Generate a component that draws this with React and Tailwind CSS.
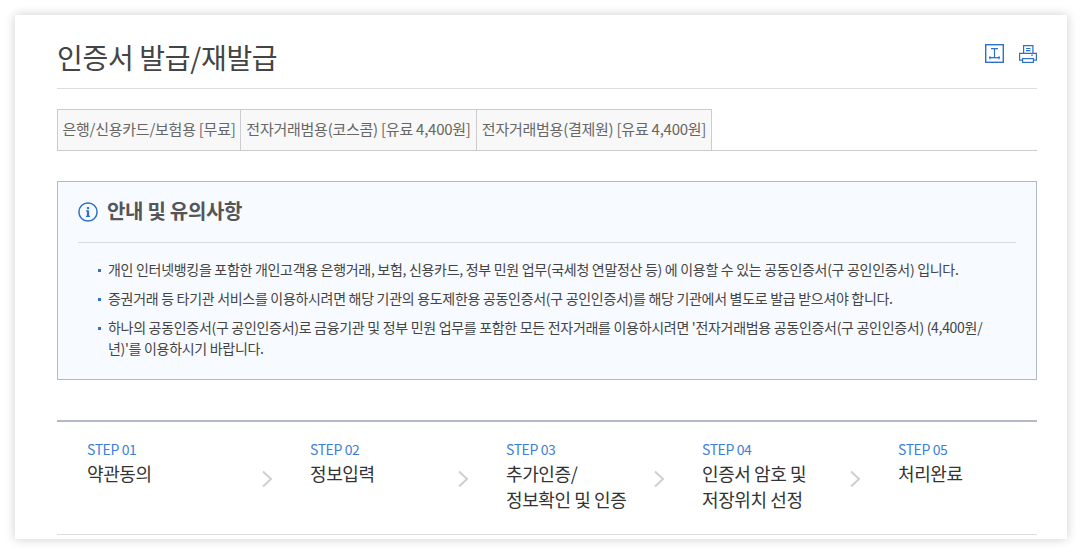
import React from 'react';

const font = { fontFamily: '"Noto Sans CJK KR", "Noto Sans", sans-serif' };

const tabs = [
  { label: '은행/신용카드/보험용 [무료]', w: 'w-[184px]' },
  { label: '전자거래범용(코스콤) [유료 4,400원]', w: 'w-[237px]' },
  { label: '전자거래범용(결제원) [유료 4,400원]', w: 'w-[236px]' },
];

const notes = [
  '개인 인터넷뱅킹을 포함한 개인고객용 은행거래, 보험, 신용카드, 정부 민원 업무(국세청 연말정산 등) 에 이용할 수 있는 공동인증서(구 공인인증서) 입니다.',
  '증권거래 등 타기관 서비스를 이용하시려면 해당 기관의 용도제한용 공동인증서(구 공인인증서)를 해당 기관에서 별도로 발급 받으셔야 합니다.',
  "하나의 공동인증서(구 공인인증서)로 금융기관 및 정부 민원 업무를 포함한 모든 전자거래를 이용하시려면 '전자거래범용 공동인증서(구 공인인증서) (4,400원/년)'를 이용하시기 바랍니다.",
];

const steps = [
  { no: 'STEP 01', lines: ['약관동의'], w: 'w-[253px] pl-[30px]' },
  { no: 'STEP 02', lines: ['정보입력'], w: 'w-[196px]' },
  { no: 'STEP 03', lines: ['추가인증/', '정보확인 및 인증'], w: 'w-[196px]' },
  { no: 'STEP 04', lines: ['인증서 암호 및', '저장위치 선정'], w: 'w-[196px]' },
  { no: 'STEP 05', lines: ['처리완료'], w: 'w-[139px]', last: true },
];

function FontSizeIcon() {
  return (
    <svg width="19" height="19" viewBox="0 0 19 19" fill="none" stroke="#2d72c8">
      <rect x="0.7" y="0.7" width="17.600" height="17.600" strokeWidth="1.400" />
      <path d="M6 4.600h7M9.500 4.600v9" strokeWidth="1.200" />
      <path d="M4 13.700h11" strokeWidth="1.300" />
      <path d="M5 12v3.400M14 12v3.400" strokeWidth="0.900" />
    </svg>
  );
}

function PrintIcon() {
  return (
    <svg width="18" height="18" viewBox="0 0 18 18" fill="none" stroke="#2d72c8" strokeWidth="1.200">
      <path d="M4.600 8V0.600h9.300V8" />
      <path d="M3.500 15.200H0.600V8.300h16.800v6.900h-3" />
      <rect x="3.600" y="13.600" width="10.800" height="3.800" />
      <path d="M7 3.500h4.500M7 5.700h4.500" />
      <path d="M12 10.200h2" strokeWidth="1" />
    </svg>
  );
}

function InfoIcon() {
  return (
    <svg width="20" height="20" viewBox="0 0 20 20" fill="none" className="shrink-0">
      <circle cx="10" cy="10" r="9.100" stroke="#2d72c8" strokeWidth="1.500" />
      <path d="M10 8.600v5.600" stroke="#2d72c8" strokeWidth="2.200" />
      <path d="M8 8.900h2.500M8 14.300h4" stroke="#2d72c8" strokeWidth="1.200" />
      <rect x="8.900" y="5" width="2.200" height="2.100" fill="#2d72c8" />
    </svg>
  );
}

function Chevron() {
  return (
    <svg width="12" height="18" viewBox="0 0 12 18" fill="none" className="absolute right-[37px] top-[31px]">
      <path d="M2 1.500l8 7.500-8 7.500" stroke="#cfcfcf" strokeWidth="2" />
    </svg>
  );
}

export default function App() {
  return (
    <div className="h-[554px] w-[1082px] overflow-hidden bg-white pl-[15px] pt-[15px]" style={font}>
      <div className="h-[524px] w-[1052px] bg-white pl-[42px] pr-[30px] shadow-[0_0_10px_rgba(0,0,0,0.2)]">
        {/* Title */}
        <div className="flex h-[74px] items-center justify-between border-b border-[#dddddd] pt-[11px]">
          <h1 className="text-[28px] font-normal leading-none tracking-[-0.3px] text-[#444444]">인증서 발급/재발급</h1>
          <div className="flex items-center gap-[15px] pb-[7px]">
            <FontSizeIcon />
            <PrintIcon />
          </div>
        </div>

        {/* Tabs */}
        <div className="mt-5 flex h-[42px] border-b border-[#cccccc]">
          {tabs.map((t, i) => (
            <div
              key={t.label}
              className={`${t.w} flex h-[42px] items-center justify-center whitespace-nowrap border border-[#cccccc] bg-[#f8f8f8] pb-[2px] text-[15px] tracking-[-0.25px] text-[#666666] ${i > 0 ? 'ml-[-1px]' : ''}`}
            >
              {t.label}
            </div>
          ))}
        </div>

        {/* Notice */}
        <div className="mt-[30px] h-[199px] border border-[#b4b8cb] bg-[#f7faff] px-5">
          <div className="flex h-[61px] items-center gap-[9px] border-b border-[#d8dbe3]">
            <InfoIcon />
            <h2 className="pb-[2px] text-[20px] font-bold tracking-[-0.3px] text-[#555555]">안내 및 유의사항</h2>
          </div>
          <ul className="mt-[16px] pl-[19px] pr-[14px]">
            {notes.map(n => (
              <li key={n} className="relative mb-[8px] pl-[11px] text-[14px] leading-[21px] tracking-[-0.3px] text-[#444444]">
                <span className="absolute left-[1px] top-[10px] h-[3px] w-[3px] bg-[#2d72c8]" />
                {n}
              </li>
            ))}
          </ul>
        </div>

        {/* Steps */}
        <div className="mt-10 flex h-[115px] border-b border-[#dddddd] border-t-2 border-t-[#b4b8c4] pt-[17px]">
          {steps.map(s => (
            <div key={s.no} className={`${s.w} relative`}>
              <div className="text-[14px] leading-[20px] tracking-[-0.4px] text-[#3b7fd9]">{s.no}</div>
              <div className="mt-[1px] text-[18px] leading-[26px] tracking-[-0.4px] text-[#333333]">
                {s.lines.map(l => <div key={l}>{l}</div>)}
              </div>
              {!s.last && <Chevron />}
            </div>
          ))}
        </div>
      </div>
    </div>
  );
}
